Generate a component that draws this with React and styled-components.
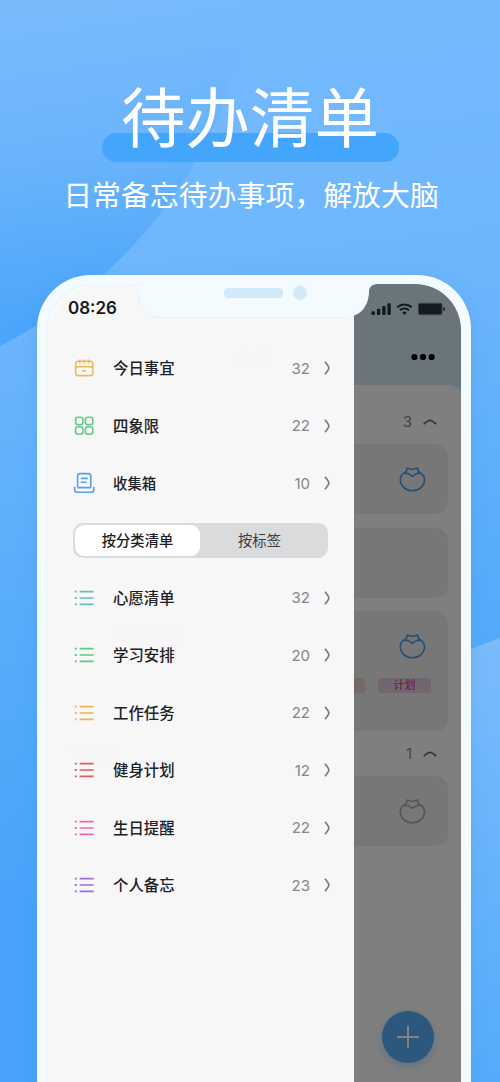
import React, { useState } from "react";
import styled, { createGlobalStyle } from "styled-components";

const mainLists = [
  { name: "今日事宜", count: 32, icon: "calendar", color: "#ecb95c" },
  { name: "四象限", count: 22, icon: "grid", color: "#68c98a" },
  { name: "收集箱", count: 10, icon: "inbox", color: "#5a9fe8", small: true },
];

const categories = [
  { name: "心愿清单", count: 32, color: "#62bfc5" },
  { name: "学习安排", count: 20, color: "#5fc983" },
  { name: "工作任务", count: 22, color: "#f0b44c" },
  { name: "健身计划", count: 12, color: "#e5595f" },
  { name: "生日提醒", count: 22, color: "#ee66b8" },
  { name: "个人备忘", count: 23, color: "#a36bd8" },
];

function RowIcon({ type, color }) {
  if (type === "calendar") {
    return (
      <Icon viewBox="0 0 22 22" $color={color}>
        <rect x="2.6" y="4.2" width="17.2" height="14.4" rx="2.6" />
        <path d="M2.6 9.8h17.2M6.8 2.4v4M11.2 2.4v4M15.6 2.4v4M9 14h4.2" />
      </Icon>
    );
  }
  if (type === "grid") {
    return (
      <Icon viewBox="0 0 22 22" $color={color}>
        <rect x="2.6" y="2.2" width="7.4" height="7.4" rx="2.4" />
        <rect x="12.4" y="2.2" width="7.4" height="7.4" rx="2.4" />
        <rect x="2.6" y="11.8" width="7.4" height="7.4" rx="2.4" />
        <rect x="12.4" y="11.8" width="7.4" height="7.4" rx="2.4" />
      </Icon>
    );
  }
  if (type === "inbox") {
    return (
      <Icon viewBox="0 0 22 22" $color={color}>
        <path d="M4.6 15.6V4.2a2.6 2.6 0 0 1 2.6-2.6h8a2.6 2.6 0 0 1 2.6 2.6v11.4M7.800 6.400h7M7.800 10.200h5.600" />
        <path d="M1.600 14.800v3a2.400 2.400 0 0 0 2.400 2.400h14.400a2.400 2.400 0 0 0 2.400-2.400v-3M4.600 15.600h13.200" />
      </Icon>
    );
  }
  return (
    <Icon viewBox="0 0 22 22" $color={color}>
      <path d="M6.6 4.6h14M6.6 11h14M6.6 17.4h14" />
      <path d="M1.8 4.600h2M1.800 11h2M1.800 17.400h2" strokeWidth="1.8" />
    </Icon>
  );
}

function ListRow({ item }) {
  return (
    <Row>
      <RowIcon type={item.icon} color={item.color} />
      <RowName $small={item.small}>{item.name}</RowName>
      <RowCount>{item.count}</RowCount>
      <Arrow viewBox="0 0 6 14">
        <path d="M1 .8Q4.800 5.200 4.800 7Q4.800 8.800 1 13.200" />
      </Arrow>
    </Row>
  );
}

function Tomato({ color }) {
  return (
    <TomatoSvg viewBox="0 0 26 26" $color={color}>
      <path d="M5.400 6.400C2.800 7.800 1.300 10.400 1.300 13.200c0 6 5 10.600 11.600 10.600s11.600-4.600 11.600-10.600c0-2.800-1.500-5.400-4.100-6.800" />
      <path d="M7.900 1.900 12.900 3.400 17.900 1.900 18.600 4.900 20.600 6.900 16.700 7.300 12.900 9.900 9.100 7.300 5.200 6.900 7.200 4.900Z" />
    </TomatoSvg>
  );
}

function Group({ title, count, compact }) {
  return (
    <GroupHead $compact={compact}>
      <span>{title}</span>
      <GroupCount>{count}</GroupCount>
      <Caret viewBox="0 0 14 6">
        <path d="M.8 5Q5 1.300 7 1.300Q9 1.300 13.200 5" />
      </Caret>
    </GroupHead>
  );
}

function App() {
  const [tab, setTab] = useState("category");

  return (
    <>
      <GlobalStyle />
      <Page>
        <Backdrop viewBox="0 0 500 1082">
          <defs>
            <linearGradient id="blob" x1="0" y1="0" x2="0.1" y2="1">
              <stop offset="0" stopColor="#79bcfb" />
              <stop offset="0.45" stopColor="#6bb4fb" />
              <stop offset="1" stopColor="#49a4fb" />
            </linearGradient>
            <linearGradient id="corner" x1="0" y1="0" x2="0" y2="1">
              <stop offset="0" stopColor="#7abcfb" />
              <stop offset="1" stopColor="#55abfb" />
            </linearGradient>
          </defs>
          <path d="M0 0H245C243 120 150 270 0 346Z" fill="url(#blob)" />
          <path d="M500 638Q420 665 360 720V1082H500Z" fill="url(#corner)" />
        </Backdrop>
        <Heading>
          <Title>待办清单</Title>
          <Subtitle>日常备忘待办事项，解放大脑</Subtitle>
        </Heading>
        <Phone>
          <Screen>
            <Content>
              <TopBar>
                <PageName>今天</PageName>
                <More viewBox="0 0 24 8">
                  <circle cx="3.400" cy="4" r="3.100" />
                  <circle cx="12" cy="4" r="3.100" />
                  <circle cx="20.600" cy="4" r="3.100" />
                </More>
              </TopBar>
              <Sheet>
                <Group title="" count={3} />
                <Card $height={70}>
                  <CardTop>
                    <CardName />
                    <Tomato color="#4d9fe6" />
                  </CardTop>
                </Card>
                <Card $height={70} />
                <Card $height={120}>
                  <CardTop>
                    <CardName>复习-物理</CardName>
                    <Tomato color="#4d9fe6" />
                  </CardTop>
                  <Tags>
                    <Tag $bg="#e2d4cd" />
                    <Tag $bg="#e4cedc">计划</Tag>
                  </Tags>
                </Card>
                <Group title="已完成" count={1} compact />
                <Card $height={70}>
                  <CardTop>
                    <CardName />
                    <Tomato color="#a9abad" />
                  </CardTop>
                </Card>
              </Sheet>
            </Content>
            <Fab>
              <svg width="24" height="24" viewBox="0 0 24 24" fill="none" stroke="#fff" strokeWidth="2">
                <path d="M12 1v22M1 12h22" />
              </svg>
            </Fab>
            <Mask />
            <Drawer>
              {mainLists.map((item) => (
                <ListRow key={item.name} item={item} />
              ))}
              <TabRow>
                <Tabs>
                  <Tab $active={tab === "category"} onClick={() => setTab("category")}>
                    按分类清单
                  </Tab>
                  <Tab $active={tab === "tag"} onClick={() => setTab("tag")}>
                    按标签
                  </Tab>
                </Tabs>
              </TabRow>
              {categories.map((item) => (
                <ListRow key={item.name} item={item} />
              ))}
            </Drawer>
            <StatusBar>
              <Clock>08:26</Clock>
              <Signals viewBox="0 0 76 14">
                <rect x="0.500" y="9.200" width="3.400" height="3.800" rx="1" />
                <rect x="5.900" y="6.800" width="3.400" height="6.200" rx="1" />
                <rect x="11.200" y="4" width="3.400" height="9" rx="1" />
                <rect x="16.400" y="1.200" width="3.400" height="11.800" rx="1" />
                <path d="M26.200 5.200a11 11 0 0 1 14.600 0M29 8.200a6.900 6.900 0 0 1 9 0" fill="none" stroke="#121a1f" strokeWidth="2.100" />
                <path d="M33.500 13l-2.400-2.600a3.700 3.700 0 0 1 4.800 0z" />
                <rect x="47.500" y="1.300" width="23.500" height="11.400" rx="1.800" fill="#151b1f" stroke="#3a4246" />
                <path d="M72.400 5v4.200q1.700-.6 1.700-2.100t-1.700-2.100z" />
              </Signals>
            </StatusBar>
          </Screen>
          <Notch viewBox="0 0 246 35">
            <path d="M0 0C5 1 7 3 7 9C8 24 16 33.500 32 33.500H212C228 33.500 237 24 238 9C238 3 240 1 246 0Z" fill="#f3fbff" />
            <path d="M0 .8C5 1 7 3 7 9C8 24 16 33.500 32 33.500H217" fill="none" stroke="#e2f3fc" />
          </Notch>
          <Speaker />
          <Camera />
        </Phone>
      </Page>
    </>
  );
}

const GlobalStyle = createGlobalStyle`
  body {
    margin: 0;
    font-family: "Inter", "Noto Sans CJK SC", sans-serif;
  }
`;
const Page = styled.div`
  position: relative;
  display: flex;
  flex-direction: column;
  width: 500px;
  height: 1082px;
  overflow: hidden;
  background: linear-gradient(173deg, #74bafc 0%, #6fb7fc 25%, #58acfb 55%, #49a3fa 80%, #49a3fa 100%);
`;
const Backdrop = styled.svg`
  position: absolute;
  inset: 0;
  width: 500px;
  height: 1082px;
`;
const Heading = styled.header`
  position: relative;
  display: flex;
  flex-direction: column;
  flex-shrink: 0;
  align-items: center;
  height: 275px;
  box-sizing: border-box;
  padding-top: 80px;
  color: #fff;
  font-family: "Noto Sans CJK SC", sans-serif;
`;
const Title = styled.h1`
  position: relative;
  z-index: 0;
  display: flex;
  justify-content: center;
  width: 297px;
  height: 82px;
  margin: 0;
  font-size: 64.500px;
  font-weight: 400;
  line-height: 69px;
  &::before {
    content: "";
    position: absolute;
    z-index: -1;
    left: 0;
    bottom: 0;
    width: 297px;
    height: 29px;
    border-radius: 15px;
    background: #43a5fc;
  }
`;
const Subtitle = styled.p`
  margin: 9px 0 0 2px;
  font-size: 28.900px;
  font-weight: 400;
  line-height: 44px;
  white-space: nowrap;
`;
const Phone = styled.main`
  position: relative;
  display: flex;
  flex-shrink: 0;
  width: 434px;
  height: 820px;
  margin-left: 37px;
  box-sizing: border-box;
  padding: 9px 10px 0;
  border-radius: 54px 54px 0 0;
  background: #f3fbff;
  box-shadow: 0 4px 18px rgba(50, 130, 220, 0.2);
`;
const Screen = styled.div`
  position: relative;
  flex: 1;
  overflow: hidden;
  border-radius: 46px 46px 0 0;
  background: #d2eaf6;
  &::after {
    content: "";
    position: absolute;
    inset: 0 auto 0 0;
    width: 307px;
    box-sizing: border-box;
    border-top: 1.500px solid #e8f6fd;
    border-left: 1.500px solid #e8f6fd;
    border-top-left-radius: 46px;
    pointer-events: none;
  }
`;
const Content = styled.div`
  display: flex;
  flex-direction: column;
  height: 100%;
`;
const TopBar = styled.div`
  display: flex;
  flex-shrink: 0;
  align-items: center;
  justify-content: space-between;
  height: 101px;
  box-sizing: border-box;
  padding: 45px 26px 0 188px;
`;
const PageName = styled.span`
  font-size: 19px;
`;
const More = styled.svg`
  width: 24px;
  height: 8px;
`;
const Sheet = styled.section`
  flex: 1;
  padding: 0 13px;
  border-radius: 11px 11px 0 0;
  background: #fff;
`;
const GroupHead = styled.div`
  display: flex;
  align-items: center;
  box-sizing: border-box;
  height: ${({ $compact }) => ($compact ? 31.5 : 59)}px;
  padding: ${({ $compact }) => ($compact ? "0 11px 13px 10px" : "14px 11px 0 10px")};
  font-size: 14.500px;
`;
const GroupCount = styled.span`
  margin-left: auto;
  color: #8a8a8a;
  font-size: 15px;
`;
const Caret = styled.svg`
  width: 14px;
  height: 6px;
  margin-left: 11px;
  fill: none;
  stroke: #6a6a6a;
  stroke-width: 1.700;
`;
const Card = styled.article`
  height: ${({ $height }) => $height}px;
  margin-bottom: 13.500px;
  border-radius: 12px;
  background: #eeeff1;
  overflow: hidden;
`;
const CardTop = styled.div`
  display: flex;
  align-items: center;
  justify-content: space-between;
  height: 70px;
  padding: 0 22px 0 52px;
`;
const CardName = styled.span`
  height: 46px;
  font-size: 15px;
`;
const TomatoSvg = styled.svg`
  width: 27px;
  height: 27px;
  fill: none;
  stroke: ${({ $color }) => $color};
  stroke-width: 1.600;
  stroke-linejoin: round;
`;
const Tags = styled.div`
  display: flex;
  justify-content: flex-end;
  gap: 13px;
  padding-right: 17px;
  margin-top: -3px;
`;
const Tag = styled.span`
  width: 53px;
  height: 15px;
  border-radius: 3px;
  background: ${({ $bg }) => $bg};
  color: #e0409c;
  font-size: 11px;
  font-weight: 500;
  line-height: 15px;
  text-align: center;
`;
const Fab = styled.button`
  position: absolute;
  right: 27px;
  top: 727px;
  display: flex;
  align-items: center;
  justify-content: center;
  width: 52px;
  height: 52px;
  padding: 0;
  border: 0;
  border-radius: 50%;
  background: #58b0fc;
  box-shadow: 0 3px 10px rgba(88, 176, 252, 0.4);
`;
const Mask = styled.div`
  position: absolute;
  inset: 0;
  border-top-left-radius: 60px;
  background: rgba(0, 0, 0, 0.5);
`;
const Drawer = styled.aside`
  position: absolute;
  top: 0;
  left: 0;
  bottom: 0;
  width: 307px;
  box-sizing: border-box;
  padding: 55.500px 23px 0 26px;
  background: rgba(250, 250, 250, 0.982);
`;
const Row = styled.div`
  display: flex;
  align-items: center;
  height: 57.450px;
`;
const Icon = styled.svg`
  width: 22px;
  height: 22px;
  fill: none;
  stroke: ${({ $color }) => $color};
  stroke-width: 1.600;
`;
const RowName = styled.span`
  margin-left: 18px;
  padding-bottom: 2px;
  color: #202124;
  font-size: ${({ $small }) => ($small ? 14.4 : 15.4)}px;
  font-weight: 500;
`;
const RowCount = styled.span`
  margin-left: auto;
  color: #85868a;
  font-size: 15px;
`;
const Arrow = styled.svg`
  width: 6px;
  height: 14px;
  margin-left: 14px;
  margin-right: 1px;
  fill: none;
  stroke: #77787b;
  stroke-width: 1.700;
`;
const TabRow = styled(Row)`
  margin-right: 3px;
`;
const Tabs = styled.div`
  display: flex;
  width: 100%;
  height: 35px;
  box-sizing: border-box;
  padding: 2px;
  border-radius: 10px;
  background: #dadbdc;
`;
const Tab = styled.button`
  flex: ${({ $active }) => ($active ? "0 0 125px" : "0 0 119px")};
  padding: 0 0 2px;
  border: 0;
  border-radius: 9px;
  background: ${({ $active }) => ($active ? "#fff" : "transparent")};
  color: ${({ $active }) => ($active ? "#1c1d1f" : "#3c3d40")};
  font-family: inherit;
  font-size: 14.300px;
  font-weight: ${({ $active }) => ($active ? 500 : 400)};
`;
const StatusBar = styled.div`
  position: absolute;
  top: 12px;
  left: 0;
  right: 0;
  display: flex;
  align-items: center;
  justify-content: space-between;
  height: 26px;
  padding: 0 14px 0 21px;
`;
const Clock = styled.span`
  padding-bottom: 2px;
  color: #16191b;
  font-size: 17px;
  font-weight: 600;
`;
const Signals = styled.svg`
  width: 76px;
  height: 14px;
  fill: #121a1f;
`;
const Notch = styled.svg`
  position: absolute;
  top: 9px;
  left: 94px;
  width: 246px;
  height: 35px;
`;
const Speaker = styled.div`
  position: absolute;
  top: 13px;
  left: 187px;
  width: 59px;
  height: 10px;
  border-radius: 4px;
  background: #d1e9f8;
`;
const Camera = styled.div`
  position: absolute;
  top: 11px;
  left: 256px;
  width: 14px;
  height: 14px;
  border-radius: 50%;
  background: #d1e9f8;
`;

export default App;
